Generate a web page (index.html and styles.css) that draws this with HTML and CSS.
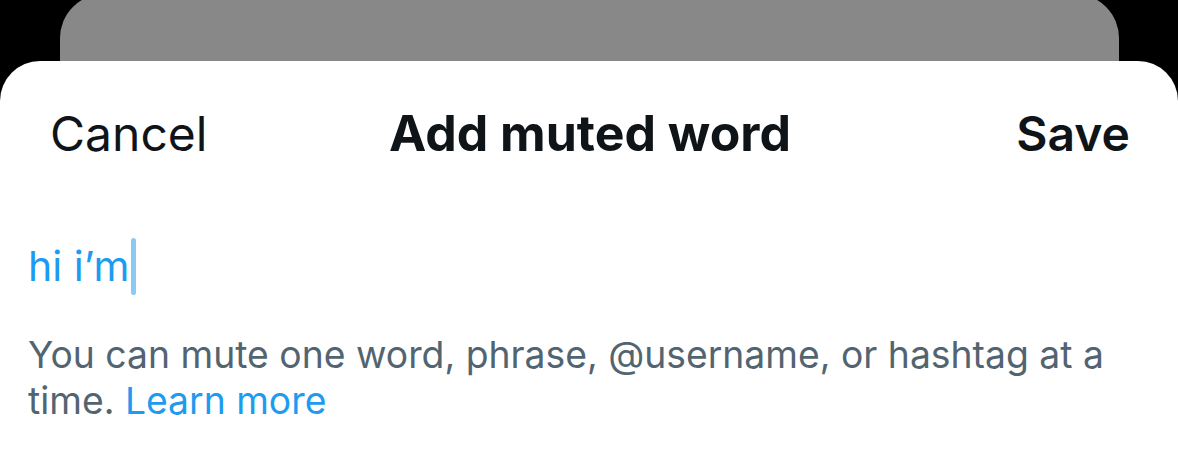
FILE: index.html
```html
<!DOCTYPE html>
<html lang="en">

<head>
    <meta charset="UTF-8">
    <title>Add muted word</title>
    <link rel="stylesheet" href="styles.css">
</head>

<body>
    <div class="backdrop-card"></div>
    <section class="sheet">
        <header class="sheet-header">
            <button class="headerButton headerButton-cancel">Cancel</button>
            <h1 class="sheet-title">Add muted word</h1>
            <button class="headerButton headerButton-save">Save</button>
        </header>
        <div class="wordField">
            <span class="wordField-value">hi i’m</span><span class="wordField-caret"></span>
        </div>
        <p class="sheet-help">You can mute one word, phrase, @username, or hashtag at a time. <a class="sheet-link" href="#">Learn more</a></p>
    </section>
</body>

</html>
```

FILE: styles.css
```css
html,
button {
    font-family: 'Inter', 'Liberation Sans', Arial, sans-serif;
}

body {
    margin: 0;
    background: #000;
    height: 469px;
    overflow: hidden;
}

.backdrop-card {
    height: 67px;
    margin: -6px 59px 0 60px;
    background: #888888;
    border-radius: 44px 44px 0 0;
}

.sheet {
    background: #fff;
    border-radius: 40px 40px 0 0;
    height: 420px;
    padding: 0 28px 0 28px;
    box-sizing: border-box;
}

.sheet-header {
    display: grid;
    grid-template-columns: 1fr auto 1fr;
    align-items: center;
    height: 144px;
    margin: 0 -28px;
    padding: 0 48px 0 50px;
}

.headerButton {
    margin: 0;
    padding: 0;
    border: 0;
    background-color: transparent;
    color: #0f1419;
    font-size: 48px;
}

.headerButton-cancel {
    font-weight: 400;
    justify-self: start;
}

.headerButton-save {
    font-weight: 600;
    justify-self: end;
}

.sheet-title {
    margin: 0;
    font-size: 50px;
    font-weight: 700;
    color: #0f1419;
}

.wordField {
    display: flex;
    align-items: center;
    height: 70px;
    margin-top: 26px;
}

.wordField-value {
    font-size: 41px;
    color: #1d9bf0;
}

.wordField-caret {
    width: 5px;
    height: 57px;
    margin-left: 2px;
    border-radius: 3px;
    background: #8ccaf5;
}

.sheet-help {
    margin: 31px 0 0 0;
    font-size: 37.3px;
    line-height: 46px;
    color: #536471;
}

.sheet-link {
    color: #1d9bf0;
    text-decoration: none;
}
```
